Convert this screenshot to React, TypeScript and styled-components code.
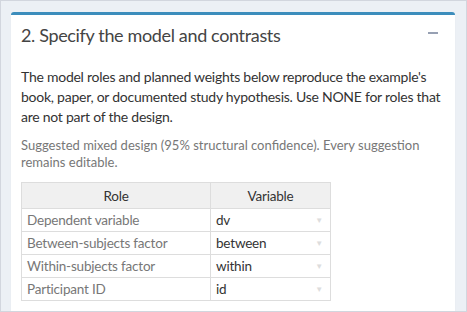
import React from 'react'
import styled, { createGlobalStyle } from 'styled-components'

const GlobalStyle = createGlobalStyle`
  html, body {
    margin: 0;
    padding: 0;
    height: 100%;
  }
  body {
    background: #ecf0f5;
    font-family: 'Lato', 'Liberation Sans', sans-serif;
    color: #333;
  }
`

const Frame = styled.div`
  box-sizing: border-box;
  width: 467px;
  height: 312px;
  border: 1px solid #d2d6de;
  padding: 11px 11px 0 10px;
  overflow: hidden;
`

const Card = styled.section`
  background: #fff;
  border-top: 3px solid #3c8dbc;
  border-radius: 3px;
  box-shadow: 0 1px 1px rgba(0, 0, 0, 0.1);
  height: 320px;
`

const CardHeader = styled.header`
  display: flex;
  align-items: center;
  justify-content: space-between;
  padding: 10px 17px 10px 10px;
`

const Title = styled.h3`
  margin: 0;
  font-size: 18px;
  line-height: 20px;
  font-weight: 400;
  letter-spacing: -0.35px;
  color: #444;
`

const CollapseIcon = styled.span`
  width: 10px;
  height: 2px;
  background: #97a0b3;
  margin-top: -4px;
`

const CardBody = styled.div`
  padding: 12px 9px 10px 10px;
`

const Lead = styled.p`
  margin: 0 0 10px;
  font-size: 14px;
  line-height: 20px;
  letter-spacing: -0.25px;
  color: #333;
`

const Hint = styled.p`
  margin: 0 0 11px;
  font-size: 13px;
  line-height: 17px;
  color: #777;
`

const RoleTable = styled.table`
  border-collapse: collapse;
  font-size: 13.5px;
  letter-spacing: -0.2px;
`

const HeadCell = styled.th<{ $w: number }>`
  background: #f0f0f0;
  border: 1px solid #ddd;
  font-weight: 400;
  color: #333;
  height: 25px;
  padding: 0 6px;
  text-align: center;
  width: ${(p) => p.$w}px;
`

const Cell = styled.td<{ $muted?: boolean }>`
  border: 1px solid #ddd;
  height: 22px;
  padding: 0 5px;
  color: ${(p) => (p.$muted ? '#777' : '#333')};
`

const SelectBox = styled.div`
  display: flex;
  align-items: center;
  justify-content: space-between;
`

const Caret = styled.span`
  font-size: 8px;
  color: #ddd;
  margin-right: 2px;
`

const rows = [
  { role: 'Dependent variable', variable: 'dv' },
  { role: 'Between-subjects factor', variable: 'between' },
  { role: 'Within-subjects factor', variable: 'within' },
  { role: 'Participant ID', variable: 'id' },
]

const App: React.FC = () => {
  return (
    <>
      <GlobalStyle />
      <Frame>
        <Card>
          <CardHeader>
            <Title>2. Specify the model and contrasts</Title>
            <CollapseIcon />
          </CardHeader>
          <CardBody>
            <Lead>
              The model roles and planned weights below reproduce the example's book, paper, or documented study
              hypothesis. Use NONE for roles that are not part of the design.
            </Lead>
            <Hint>Suggested mixed design (95% structural confidence). Every suggestion remains editable.</Hint>
            <RoleTable>
              <thead>
                <tr>
                  <HeadCell $w={176}>Role</HeadCell>
                  <HeadCell $w={107}>Variable</HeadCell>
                </tr>
              </thead>
              <tbody>
                {rows.map((r) => (
                  <tr key={r.role}>
                    <Cell $muted>{r.role}</Cell>
                    <Cell>
                      <SelectBox>
                        {r.variable}
                        <Caret>▼</Caret>
                      </SelectBox>
                    </Cell>
                  </tr>
                ))}
              </tbody>
            </RoleTable>
          </CardBody>
        </Card>
      </Frame>
    </>
  )
}

export default App
